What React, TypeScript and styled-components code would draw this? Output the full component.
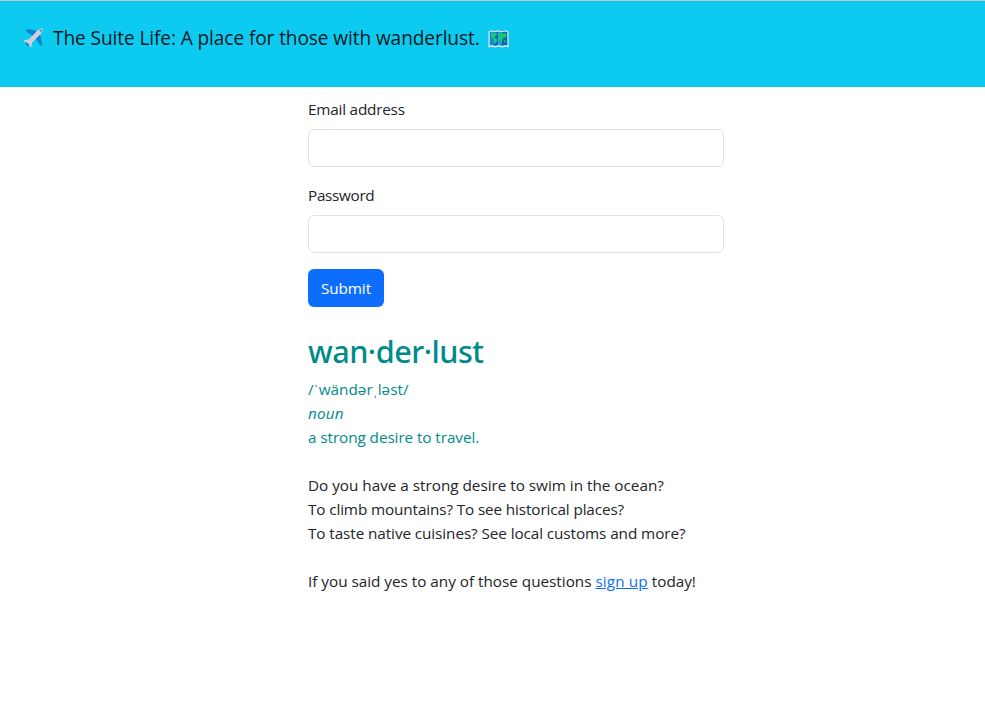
import React from "react";
import styled, { createGlobalStyle } from "styled-components";

const GlobalStyle = createGlobalStyle`
  *, *::before, *::after { box-sizing: border-box; }
  body {
    margin: 0;
    background: #fff;
    color: #212529;
    font: 400 15.3px/24px "Open Sans", sans-serif;
  }
`;

const Header = styled.header`
  display: flex;
  align-items: flex-start;
  height: 87px;
  padding: 22px 23px 0;
  border-top: 1px solid #c3c7ca;
  background: #0dcaf0;
`;

const Brand = styled.div`
  display: flex;
  align-items: center;
  height: 30px;
  color: rgba(0, 0, 0, 0.9);
  font-size: 19.1px;
  line-height: 30px;
  letter-spacing: -0.1px;
  white-space: nowrap;
`;

const BrandText = styled.span`
  margin: 0 8px 0 9px;
`;

const Emoji = styled.svg<{ $drop?: number }>`
  display: block;
  flex: none;
  width: 21px;
  height: 20px;
  margin-top: ${(p) => p.$drop ?? 0}px;
`;

const Main = styled.main`
  width: 416px;
  margin: 10px 0 0 308px;
`;

const Field = styled.div`
  margin-bottom: 16px;
`;

const Label = styled.label<{ $spacing: number }>`
  display: block;
  margin-bottom: 8px;
  letter-spacing: ${(p) => p.$spacing}px;
`;

const Input = styled.input`
  display: block;
  width: 100%;
  height: 38px;
  padding: 6px 12px;
  border: 1px solid #dee2e6;
  border-radius: 6px;
  background: #fff;
  font: inherit;
`;

const SubmitButton = styled.button`
  display: block;
  width: 76px;
  height: 38px;
  padding: 0;
  border: 0;
  border-radius: 6px;
  background: #0d6efd;
  color: #fff;
  font: inherit;
  letter-spacing: -0.1px;
`;

const Definition = styled.section`
  margin-top: 25px;
  color: #008b8b;
`;

const Word = styled.h2`
  margin: 0 0 6px;
  font: 500 30.6px/39px "Noto Sans", sans-serif;
  letter-spacing: -0.5px;
`;

const Copy = styled.section`
  margin-top: 24px;
`;

const Line = styled.p<{ $spacing?: number; $gap?: boolean }>`
  height: 24px;
  margin: ${(p) => (p.$gap ? 24 : 0)}px 0 0;
  letter-spacing: ${(p) => p.$spacing ?? 0}px;
  white-space: nowrap;
`;

const Link = styled.a`
  color: #0d6efd;
  letter-spacing: 0.12px;
  text-decoration: underline;
`;

function Airplane() {
  return (
    <Emoji viewBox="0 0 21 20" aria-label="airplane">
      <path d="M2.8 1.9 4.5 1l8 1.5 1.3 1.2-4.2 4.1L3 3.2Z" fill="#0a84d0" />
      <path d="m16.1 6.7 1.5 1.2 1.6 7.9-.8 1.7-1.3-.2-4.6-6.7Z" fill="#0a84d0" />
      <path d="m2 15.2 2.3-1.2 2.3 2.3-1.5 2.2Z" fill="#0a84d0" />
      <path
        d="M19.4.8c.9.8.4 2.9-.8 4.1L9.2 14.4l-.8 4.3-.9.9-1.9-3.8-.9-.8L.4 13l.9-1 4.4-.6L15.2 1.8C16.5.5 18.5 0 19.4.8Z"
        fill="#d3cdda"
      />
      <path d="m15.9 2.2 1.4-.9 1.8 1.8-.9 1.4-.7-1.4Z" fill="#0a84d0" />
    </Emoji>
  );
}

function WorldMap() {
  return (
    <Emoji $drop={2} viewBox="0 0 21 20" aria-label="world map">
      <path d="m.5 2.5 3-1.2 3.5 1 3.5-1 3.5 1 3.5-1 3 1.2v16l-3.2-.9-3.3 1-3.5-1-3.5 1-3.3-1-3.2.9Z" fill="#e4edf3" />
      <path d="m1.7 3.1 2.3-.6 3 .8v13.6l-3-.8-2.3.6Z" fill="#1686d9" />
      <path d="m7 3.3 3.5-.9v13.7L7 16.9Z" fill="#0867b2" />
      <path d="m10.5 2.4 3.5.9v13.6l-3.5-.8Z" fill="#1497e5" />
      <path d="m14 3.3 3-.8 2.3.6v13.6l-2.3-.6-3 .8Z" fill="#0867b2" />
      <path
        d="m2.8 4.6 2.2-1 1.8.9 1.7-.8.9 1-1.6 2.1-1.5 1.1.5 1.2 1.8.7.8 1.5-1.4 2.4-1.1 1.4-.8-2.9-1.2-2.5-1.7-2.3Z"
        fill="#10cf70"
      />
      <path
        d="m11 5 2.2-1.2 1.4.9 3-.9.9 2.1-1.2 2.8-1.5-.5-.8 2-1-.5.2 2.4-1.6 2-1-2.9-1-1.8.7-1.9Zm5.1 6.2 1.9.5v1.8l-1.9-.4Z"
        fill="#10cf70"
      />
    </Emoji>
  );
}

export default function App() {
  return (
    <>
      <GlobalStyle />
      <Header>
        <Brand>
          <Airplane />
          <BrandText>The Suite Life: A place for those with wanderlust.</BrandText>
          <WorldMap />
        </Brand>
      </Header>
      <Main>
        <form onSubmit={(e) => e.preventDefault()}>
          <Field>
            <Label htmlFor="email" $spacing={-0.21}>Email address</Label>
            <Input id="email" type="email" />
          </Field>
          <Field>
            <Label htmlFor="password" $spacing={-0.32}>Password</Label>
            <Input id="password" type="password" />
          </Field>
          <SubmitButton type="submit">Submit</SubmitButton>
        </form>
        <Definition>
          <Word>wan·der·lust</Word>
          <Line>/ˈwändərˌləst/</Line>
          <Line $spacing={0.15}><em>noun</em></Line>
          <Line $spacing={-0.08}>a strong desire to travel.</Line>
        </Definition>
        <Copy>
          <Line $spacing={-0.02}>Do you have a strong desire to swim in the ocean?</Line>
          <Line $spacing={-0.13}>To climb mountains? To see historical places?</Line>
          <Line $spacing={-0.09}>To taste native cuisines? See local customs and more?</Line>
          <Line $spacing={-0.02} $gap>
            If you said yes to any of those questions <Link href="#signup">sign up</Link> today!
          </Line>
        </Copy>
      </Main>
    </>
  );
}
